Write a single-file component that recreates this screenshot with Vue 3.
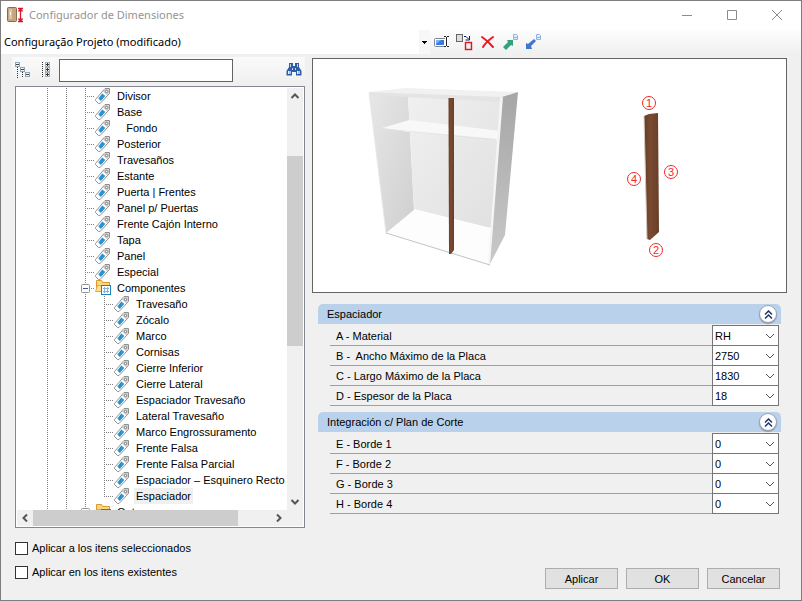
<script setup>
import { ref, reactive } from 'vue'

const search = ref('')
const project = 'Configuração Projeto (modificado)'

// Árbol: los niveles indican cuántas guías se dibujan antes del icono
const nodes = [
    { label: 'Divisor', level: 1 },
    { label: 'Base', level: 1 },
    { label: '   Fondo', level: 1 },
    { label: 'Posterior', level: 1 },
    { label: 'Travesaños', level: 1 },
    { label: 'Estante', level: 1 },
    { label: 'Puerta | Frentes', level: 1 },
    { label: 'Panel p/ Puertas', level: 1 },
    { label: 'Frente Cajón Interno', level: 1 },
    { label: 'Tapa', level: 1 },
    { label: 'Panel', level: 1 },
    { label: 'Especial', level: 1 },
    { label: 'Componentes', level: 1, folder: true },
    { label: 'Travesaño', level: 2 },
    { label: 'Zócalo', level: 2 },
    { label: 'Marco', level: 2 },
    { label: 'Cornisas', level: 2 },
    { label: 'Cierre Inferior', level: 2 },
    { label: 'Cierre Lateral', level: 2 },
    { label: 'Espaciador Travesaño', level: 2 },
    { label: 'Lateral Travesaño', level: 2 },
    { label: 'Marco Engrossuramento', level: 2 },
    { label: 'Frente Falsa', level: 2 },
    { label: 'Frente Falsa Parcial', level: 2 },
    { label: 'Espaciador – Esquinero Recto', level: 2 },
    { label: 'Espaciador', level: 2, last: true },
    { label: 'Outros', level: 1, folder: true }
]
const selected = ref(25)

const groups = reactive([
    {
        title: 'Espaciador',
        open: true,
        fields: [
            { id: 'a', label: 'A - Material', value: 'RH' },
            { id: 'b', label: 'B -  Ancho Máximo de la Placa', value: '2750' },
            { id: 'c', label: 'C - Largo Máximo de la Placa', value: '1830' },
            { id: 'd', label: 'D - Espesor de la Placa', value: '18' }
        ]
    },
    {
        title: 'Integración c/ Plan de Corte',
        open: true,
        fields: [
            { id: 'e', label: 'E - Borde 1', value: '0' },
            { id: 'f', label: 'F - Borde 2', value: '0' },
            { id: 'g', label: 'G - Borde 3', value: '0' },
            { id: 'h', label: 'H - Borde 4', value: '0' }
        ]
    }
])

const applySelected = ref(false)
const applyExisting = ref(false)

const marks = [
    { n: 1, x: 336, y: 44 },
    { n: 2, x: 343, y: 191 },
    { n: 3, x: 358, y: 113 },
    { n: 4, x: 321, y: 120 }
]
</script>

<template>
    <div class="window">
        <header class="titlebar">
            <svg class="app-icon" width="18" height="16" viewBox="0 0 18 16">
                <rect x="0.5" y="0.5" width="9" height="14" rx="1" fill="#c5a582" stroke="#8a6a4c" />
                <rect x="2" y="2" width="3" height="10" fill="#dcc4a6" />
                <path d="M3.5 5v3" stroke="#fff" />
                <path d="M11 1.5h5M11 14.5h5M13.5 2v12M11.5 4.5l2-2.500 2 2.500M11.500 11.500l2 2.500 2-2.500" fill="none" stroke="#d9142b" stroke-width="1.300" />
            </svg>
            <span class="title">Configurador de Dimensiones</span>
            <div class="window-buttons">
                <button aria-label="Minimizar"><svg width="12" height="12"><path d="M1 6.500h10" /></svg></button>
                <button aria-label="Maximizar"><svg width="12" height="12"><path d="M1.500 1.500h9v9h-9z" /></svg></button>
                <button aria-label="Cerrar"><svg width="12" height="12"><path d="M1 1l10 10M11 1L1 11" /></svg></button>
            </div>
        </header>

        <div class="project-bar">
            <div class="project-combo">
                <select aria-label="Proyecto">
                    <option>{{ project }}</option>
                </select>
                <svg width="11" height="24" viewBox="0 0 11 24"><path d="M3 11h5v1h-1v1h-1v1h-1v-1h-1v-1h-1z" fill="#000" /></svg>
            </div>
            <button class="tool" aria-label="Renombrar">
                <svg width="16" height="16" viewBox="0 0 16 16">
                    <rect x="0.500" y="4.500" width="13" height="8" rx="1" fill="#fff" stroke="#7b8794" />
                    <rect x="2" y="6" width="8" height="5" fill="#3f78dc" />
                    <path d="M2 6h5l-5 4z" fill="#86aef0" />
                    <path d="M12.500 3v10" stroke="#fff" stroke-width="3" />
                    <path d="M10 2.500h2M13 2.500h2M10 12.500h2M13 12.500h2M12.500 3v9" fill="none" stroke="#222" />
                </svg>
            </button>
            <button class="tool" aria-label="Reemplazar">
                <svg width="17" height="17" viewBox="0 0 17 17">
                    <rect x="0.500" y="0.500" width="6" height="7" fill="#ddd" stroke="#666" />
                    <rect x="9.500" y="8.500" width="6" height="7" fill="#eee" stroke="#e01515" stroke-width="1.400" />
                    <path d="M8 2.500h2l3 3M13.500 2v4h-4" fill="none" stroke="#0a1a6a" />
                </svg>
            </button>
            <button class="tool" aria-label="Eliminar">
                <svg width="16" height="16" viewBox="0 0 16 16">
                    <path d="M2 3q6 4 11 10M13 3Q6 8 3 13" fill="none" stroke="#ec1c24" stroke-width="2" stroke-linecap="round" />
                </svg>
            </button>
            <button class="tool" aria-label="Exportar">
                <svg width="16" height="16" viewBox="0 0 16 16">
                    <path d="M0 13l5-5-1-2h6v6l-2-1-5 5z" fill="#2fa37b" />
                    <path d="M10.500 0.500h3l1 1v4h-4z" fill="#e6f0fc" stroke="#8fb2e4" />
                    <path d="M11 3.500h3" stroke="#8fb2e4" />
                </svg>
            </button>
            <button class="tool" aria-label="Importar">
                <svg width="16" height="16" viewBox="0 0 16 16">
                    <path d="M0 9l2 1 6-5 2 2-5 5 1 3H0z" fill="#3d78cc" />
                    <path d="M10.500 0.500h3l1 1v4h-4z" fill="#e6f0fc" stroke="#8fb2e4" />
                    <path d="M11 3.500h3" stroke="#8fb2e4" />
                </svg>
            </button>
        </div>

        <main class="body">
            <section class="left">
                <div class="search-bar">
                    <button class="tool" aria-label="Contraer">
                        <svg width="16" height="16" viewBox="0 0 16 16">
                            <path d="M2.500 5v11M7.500 10v6" stroke="#333" stroke-dasharray="1 1" />
                            <g fill="#edf4fa" stroke="#8ba6bb">
                                <rect x="0.500" y="0.500" width="4" height="4" />
                                <rect x="5.500" y="5.500" width="4" height="4" />
                                <rect x="10.500" y="10.500" width="4" height="4" />
                            </g>
                            <path d="M1 2.500h3M6 7.500h3M11 12.500h3" stroke="#444" />
                        </svg>
                    </button>
                    <button class="tool" aria-label="Expandir">
                        <svg width="16" height="16" viewBox="0 0 16 16">
                            <path d="M4.500 0v15" stroke="#333" stroke-dasharray="1 1" />
                            <g fill="#edf4fa" stroke="#a5b0b9">
                                <rect x="7.500" y="0.500" width="4" height="4" />
                                <rect x="7.500" y="5.500" width="4" height="4" />
                                <rect x="7.500" y="10.500" width="4" height="4" />
                            </g>
                            <path d="M8 2.500h3M8 7.500h3M8 12.500h3M9.500 1v3M9.500 6v3M9.500 11v3" stroke="#333" />
                        </svg>
                    </button>
                    <input v-model="search" type="text" aria-label="Buscar" />
                    <button class="tool find" aria-label="Buscar siguiente">
                        <svg width="16" height="16" viewBox="0 0 16 16">
                            <path d="M3 1h4v3h2V1h4v4l2.500 4v4.500h-5.500V10H6v3.500H.500V9L3 5z" fill="#2f5ca6" />
                            <path d="M4.500 2v3M11.500 2v3M6.500 6v2M9.500 6v2" stroke="#b7d2f4" />
                            <path d="M2 9h3v3H2zM11 9h3v3h-3z" fill="#9fc3ee" />
                            <path d="M2.500 9v3M11.500 9v3" stroke="#e4f0fd" />
                        </svg>
                    </button>
                </div>

                <div class="tree">
                    <ul class="nodes">
                        <li v-for="(node, index) in nodes" :key="index" @click="selected = index">
                            <span class="guide"></span>
                            <span class="guide"></span>
                            <span class="guide" :class="{ elbow: node.level === 1 }">
                                <svg v-if="node.folder" class="expander" width="9" height="9">
                                    <rect x="0.500" y="0.500" width="8" height="8" rx="1" fill="#fff" stroke="#919191" />
                                    <path d="M2 4.500h5" stroke="#3b5aa5" />
                                </svg>
                            </span>
                            <span v-if="node.level === 2" class="guide elbow" :class="{ last: node.last }"></span>

                            <svg v-if="node.folder" class="node-icon" width="16" height="16" viewBox="0 0 16 16">
                                <path d="M1.500 11.500v-11h5l1 2h7v9z" fill="#fbd77f" stroke="#d99a2b" />
                                <path d="M0.500 11.500l2-6h12v6z" fill="#ffe09a" stroke="#e2aa42" />
                                <rect x="6.500" y="5.500" width="9" height="9" fill="#fff" stroke="#1b84bd" />
                                <path d="M8 8.500h6M8 11.500h6M9.500 7v6M12.500 7v6" stroke="#8ab0e0" />
                            </svg>
                            <svg v-else class="node-icon" width="16" height="16" viewBox="0 0 16 16">
                                <path d="M0.500 11.500L10 .500h4.500v5L5 15.500H3.500l-3-3z" fill="#fff" stroke="#8f8f8f" />
                                <path d="M10 1h4v4.500l-2 2-4-4z" fill="#d5d5d5" />
                                <circle cx="11.500" cy="3.500" r="1.200" fill="#fff" stroke="#777" />
                                <path d="M3.300 10.500L7.300 5.500l3 2.500-4.500 5z" fill="#2793d2" />
                            </svg>
                            <span class="label" :class="{ selected: selected === index }">{{ node.label }}</span>
                        </li>
                    </ul>
                    <div class="scroll vertical">
                        <svg width="16" height="16"><path d="M4.500 10L8 6.500 11.500 10" /></svg>
                        <div class="track"><div class="thumb"></div></div>
                        <svg width="16" height="16"><path d="M4.500 6L8 9.500 11.500 6" /></svg>
                    </div>
                    <div class="scroll horizontal">
                        <svg width="16" height="16"><path d="M10 4.500L6.500 8 10 11.500" /></svg>
                        <div class="track"><div class="thumb"></div></div>
                        <svg width="16" height="16"><path d="M6 4.500L9.500 8 6 11.500" /></svg>
                    </div>
                </div>
            </section>

            <section class="right">
                <svg class="preview" viewBox="0 0 473 233" preserveAspectRatio="xMinYMin meet">
                    <defs>
                        <linearGradient id="side" x1="0" y1="0" x2="1" y2="1">
                            <stop offset="0" stop-color="#e7e7e7" />
                            <stop offset="1" stop-color="#cfcfcf" />
                        </linearGradient>
                        <linearGradient id="outer" x1="0" y1="0" x2="0" y2="1">
                            <stop offset="0" stop-color="#a6a6a6" />
                            <stop offset="1" stop-color="#c9c9c9" />
                        </linearGradient>
                        <linearGradient id="back" x1="0" y1="0" x2="1" y2="1">
                            <stop offset="0" stop-color="#f0f0f0" />
                            <stop offset="1" stop-color="#e0e0e0" />
                        </linearGradient>
                        <linearGradient id="wood" x1="0" y1="0" x2="1" y2="0">
                            <stop offset="0" stop-color="#643d28" />
                            <stop offset="0.4" stop-color="#7a4a30" />
                            <stop offset="1" stop-color="#683f2a" />
                        </linearGradient>
                    </defs>
                    <!-- mueble -->
                    <path d="M56 34l39 3 6 114-28 24z" fill="url(#side)" />
                    <path d="M95 37l95 4-12 128-77-19z" fill="url(#back)" />
                    <path d="M73 174l28-23 77 19-1 37z" fill="#fdfdfd" />
                    <path d="M69 69l27-8 92 11-4 10-88-9z" fill="#f8f8f8" />
                    <path d="M69 69l27 3 88 8-1 2-114-12z" fill="#e3e3e3" />
                    <path d="M56 33l36-4 113 4-16 6z" fill="#f1f1f1" />
                    <path d="M56 33l133 5-1 5-131-7z" fill="#e4e4e4" />
                    <path d="M189 38l16-5-13 143-16 31z" fill="url(#outer)" />
                    <path d="M187 39l3-1-13 169-2-1z" fill="#f4f4f4" />
                    <path d="M73 174l104 32" fill="none" stroke="#c3c3c3" />
                    <path d="M56 34l17 140" fill="none" stroke="#e9e9e9" />
                    <path d="M135.500 39h5.500v152l-3 4h-2z" fill="url(#wood)" />
                    <!-- pieza -->
                    <path d="M331 57l5-2 9-1 1 119-9 8-3-1z" fill="url(#wood)" />
                    <path d="M331 57l3 123" stroke="#cfc9c0" fill="none" />
                    <g v-for="mark in marks" :key="mark.n" class="mark">
                        <circle :cx="mark.x" :cy="mark.y" r="6.500" />
                        <text :x="mark.x" :y="mark.y + 4">{{ mark.n }}</text>
                    </g>
                </svg>

                <div v-for="group in groups" :key="group.title" class="group">
                    <div class="group-head">
                        <span>{{ group.title }}</span>
                        <button aria-label="Contraer grupo" @click="group.open = !group.open">
                            <svg width="9" height="9"><path d="M1 4.500L4.500 1 8 4.500M1 8.500L4.500 5 8 8.500" /></svg>
                        </button>
                    </div>
                    <div v-if="group.open" class="fields">
                        <div v-for="field in group.fields" :key="field.id" class="field">
                            <label :for="field.id">{{ field.label }}</label>
                            <div class="combo">
                                <select :id="field.id" v-model="field.value">
                                    <option>{{ field.value }}</option>
                                </select>
                                <svg width="10" height="6"><path d="M1 1l4 4 4-4" /></svg>
                            </div>
                        </div>
                    </div>
                </div>
            </section>
        </main>

        <footer class="footer">
            <div class="checks">
                <label><input v-model="applySelected" type="checkbox" />Aplicar a los itens seleccionados</label>
                <label><input v-model="applyExisting" type="checkbox" />Aplicar en los itens existentes</label>
            </div>
            <div class="actions">
                <button>Aplicar</button>
                <button>OK</button>
                <button>Cancelar</button>
            </div>
        </footer>
    </div>
</template>

<style>
body {
    margin: 0;
}
</style>

<style scoped>
.window {
    box-sizing: border-box;
    height: 100vh;
    display: flex;
    flex-direction: column;
    border: 1px solid #7d7d7d;
    background: #f0f0f0;
    color: #000;
    font-family: "Liberation Sans", Arial, sans-serif;
    font-size: 11px;
    line-height: 16px;
}

button,
input,
select {
    font: inherit;
    color: inherit;
    margin: 0;
    box-sizing: border-box;
}

svg {
    display: block;
    flex: none;
}

select {
    appearance: none;
    border: none;
    border-radius: 0;
    outline: none;
    background: #fff;
}

/* --- BARRA DE TÍTULO --- */
.titlebar {
    height: 29px;
    flex: none;
    display: flex;
    align-items: center;
    gap: 4px;
    padding: 0 2px 2px 6px;
    box-sizing: border-box;
    background: #fff;
    color: #949494;
    font-family: "Noto Sans", "Open Sans", sans-serif;
}

.window-buttons {
    display: flex;
    margin-left: auto;
}

.window-buttons button {
    width: 45px;
    height: 26px;
    padding: 0;
    display: flex;
    align-items: center;
    justify-content: center;
    border: none;
    background: none;
}

.window-buttons path {
    fill: none;
    stroke: #8c8c8c;
}

/* --- BARRA DEL PROYECTO --- */
.project-bar {
    height: 24px;
    flex: none;
    display: flex;
    align-items: center;
    background: linear-gradient(#fdfdfd, #f0f0f0);
}

.project-combo {
    width: 429px;
    height: 24px;
    display: grid;
    background: #fff;
}

.project-combo > * {
    grid-area: 1 / 1;
}

.project-combo select {
    padding: 0 3px;
    font-family: "Noto Sans", "Open Sans", sans-serif;
}

.project-combo svg {
    justify-self: end;
    background: #f7f7f7;
    pointer-events: none;
}

.tool {
    width: 23px;
    height: 22px;
    padding: 0;
    display: flex;
    align-items: center;
    justify-content: center;
    border: none;
    background: none;
}

/* --- CUERPO --- */
.body {
    flex: 1;
    min-height: 0;
    display: grid;
    grid-template-columns: 293px minmax(0, 1fr);
    gap: 7px;
    padding: 3px 14px 0 11px;
}

.left {
    display: flex;
    flex-direction: column;
    min-height: 0;
}

.search-bar {
    height: 26px;
    flex: none;
    display: flex;
    align-items: center;
    gap: 1px;
    background: linear-gradient(#fafafa, #f0f0f0);
}

.search-bar .tool {
    width: 22px;
}

.search-bar input {
    width: 174px;
    height: 23px;
    margin-left: 1px;
    border: 1px solid #646464;
    background: #fff;
    outline: none;
}

.search-bar .find {
    margin-left: auto;
}

/* --- ÁRBOL --- */
.tree {
    flex: 1;
    min-height: 0;
    margin: 3px 0 0 3px;
    padding: 1px;
    display: grid;
    grid-template-columns: minmax(0, 1fr) 16px;
    grid-template-rows: minmax(0, 1fr) 16px;
    border: 1px solid #828790;
    background: #fff;
}

.nodes {
    margin: 0;
    padding: 0 0 0 21px;
    list-style: none;
    overflow: hidden;
}

.nodes li {
    display: flex;
    height: 16px;
    white-space: pre;
}

.guide {
    width: 19px;
    flex: none;
    display: flex;
    align-items: center;
    background: repeating-linear-gradient(#808080 0 1px, transparent 1px 2px) 9px 0 / 1px 100% no-repeat;
}

.guide.elbow {
    background:
        repeating-linear-gradient(#808080 0 1px, transparent 1px 2px) 9px 0 / 1px 100% no-repeat,
        repeating-linear-gradient(90deg, #808080 0 1px, transparent 1px 2px) 9px 8px / 10px 1px no-repeat;
}

.guide.last {
    background-size: 1px 8px, 10px 1px;
}

.expander {
    margin-left: 5px;
}

.node-icon {
    margin-right: 4px;
}

.label {
    padding: 0 2px;
}

.label.selected {
    background: #f0f0f0;
}

/* --- BARRAS DE DESPLAZAMIENTO --- */
.scroll {
    display: flex;
    background: #f0f0f0;
}

.scroll path {
    fill: none;
    stroke: #555;
    stroke-width: 2;
}

.track {
    flex: 1;
    display: flex;
}

.thumb {
    background: #cdcdcd;
}

.vertical {
    flex-direction: column;
}

.vertical .track {
    flex-direction: column;
}

.vertical .track::before {
    content: "";
    flex: 52;
}

.vertical .thumb {
    flex: 190;
}

.vertical .track::after {
    content: "";
    flex: 148;
}

.horizontal {
    grid-column: 1 / 3;
    padding-right: 16px;
}

.horizontal .thumb {
    width: 86%;
}

/* --- PANEL DERECHO --- */
.right {
    display: flex;
    flex-direction: column;
    min-width: 0;
    padding-top: 1px;
}

.preview {
    width: 100%;
    box-sizing: border-box;
    aspect-ratio: 475 / 235;
    margin-bottom: 11px;
    border: 1px solid #646464;
    background: #fff;
}

.mark circle {
    fill: none;
    stroke: #f02a2a;
}

.mark text {
    fill: #f02a2a;
    font-family: "Liberation Sans", sans-serif;
    font-size: 11px;
    text-anchor: middle;
}

.group {
    padding: 0 6px;
    margin-bottom: 6px;
}

.group-head {
    height: 20px;
    display: flex;
    align-items: center;
    justify-content: space-between;
    padding: 0 4px 0 9px;
    border-radius: 5px 5px 0 0;
    background: #b9d1ea;
}

.group-head button {
    width: 18px;
    height: 18px;
    padding: 0;
    display: flex;
    align-items: center;
    justify-content: center;
    border: 1px solid #9aa3b5;
    border-radius: 50%;
    background: #fff;
    box-shadow: 0 1px 1px #8b95a8;
}

.group-head path {
    fill: none;
    stroke: #1d3567;
    stroke-width: 1.5;
}

.fields {
    margin: 1px 2px 0 12px;
    padding-top: 1px;
}

.field {
    height: 20px;
    display: flex;
    align-items: flex-end;
    border-bottom: 1px solid #a0a0a0;
    box-sizing: border-box;
}

.field label {
    flex: 1;
    height: 17px;
    padding-left: 6px;
    white-space: pre;
}

.combo {
    width: 67px;
    height: 21px;
    flex: none;
    display: grid;
    align-items: center;
    box-sizing: border-box;
    border: 1px solid #767676;
    background: #fff;
    margin-bottom: -1px;
}

.combo > * {
    grid-area: 1 / 1;
}

.combo select {
    width: 100%;
    height: 18px;
    padding: 0 2px;
}

.combo svg {
    justify-self: end;
    margin-right: 3px;
    pointer-events: none;
}

.combo path {
    fill: none;
    stroke: #555;
}

/* --- PIE --- */
.footer {
    flex: none;
    display: flex;
    justify-content: space-between;
    align-items: flex-end;
    padding: 12px 21px 11px 14px;
}

.checks {
    display: flex;
    flex-direction: column;
    gap: 8px;
    padding-bottom: 9px;
}

.checks label {
    display: flex;
    align-items: center;
    gap: 4px;
}

.checks input {
    appearance: none;
    width: 13px;
    height: 13px;
    border: 1px solid #333;
    background: #fff;
}

.checks input:checked {
    background: #333;
    box-shadow: inset 0 0 0 2px #fff;
}

.actions {
    display: flex;
    gap: 8px;
}

.actions button {
    width: 73px;
    height: 21px;
    padding: 0;
    border: 1px solid #adadad;
    background: #e1e1e1;
}
</style>
